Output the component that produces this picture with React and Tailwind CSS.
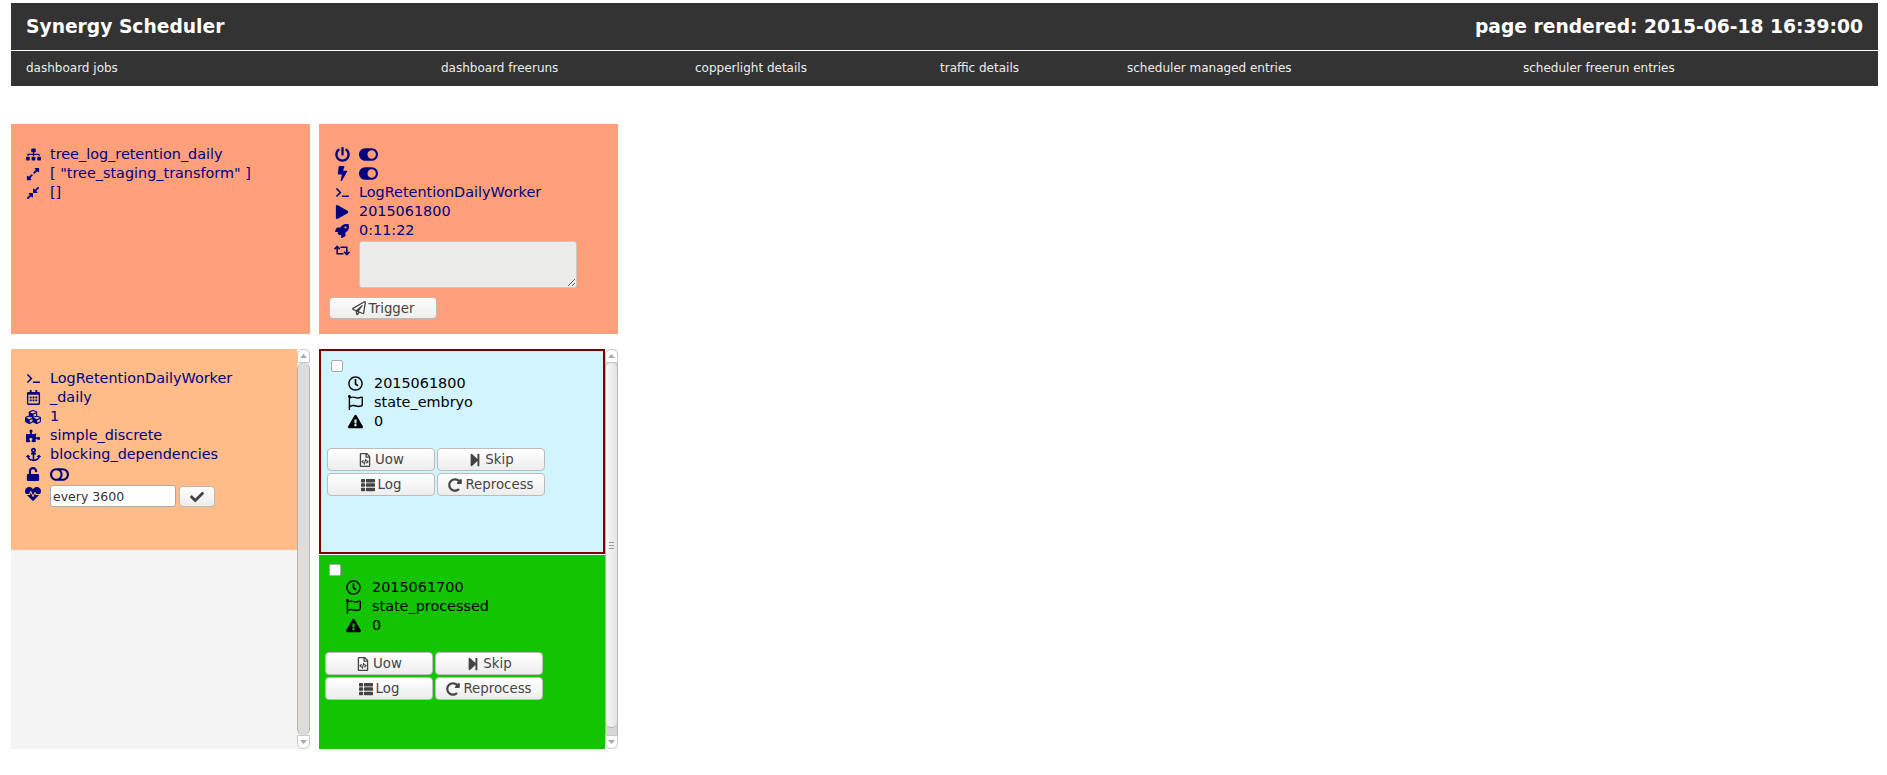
import React from 'react';
import {
  FaSitemap, FaExpandAlt, FaCompressAlt, FaPowerOff, FaBolt, FaToggleOn, FaToggleOff, FaTerminal,
  FaPlay, FaRocket, FaRetweet, FaRegPaperPlane, FaRegCalendarAlt, FaCubes, FaPuzzlePiece, FaAnchor,
  FaUnlock, FaHeartbeat, FaCheck, FaRegClock, FaRegFlag, FaExclamationTriangle, FaRegFileCode,
  FaStepForward, FaThList, FaRedoAlt,
} from 'react-icons/fa';

const NAV = [
  ['dashboard jobs', 'w-[415px]'],
  ['dashboard freeruns', 'w-[254px]'],
  ['copperlight details', 'w-[245px]'],
  ['traffic details', 'w-[187px]'],
  ['scheduler managed entries', 'w-[396px]'],
  ['scheduler freerun entries', 'w-[300px]'],
];

function Row({ icon: Icon, size = 15, children, iconCol = 'w-[25px]' }) {
  return (
    <div className="flex items-center h-[19px]">
      <span className={`${iconCol} shrink-0 flex justify-center pr-[9px]`}>
        <Icon size={size} />
      </span>
      <span className="whitespace-nowrap">{children}</span>
    </div>
  );
}

function Btn({ icon: Icon, label, className = 'w-[108px] h-[23px]' }) {
  return (
    <button className={`${className} flex items-center justify-center gap-[3px] rounded-[4px] border border-[#bbbbbb] bg-gradient-to-b from-white to-[#ededed] text-[13.33px] text-[#444444]`}>
      {Icon && <Icon size={14} />}
      {label}
    </button>
  );
}

// drawn to look like the old GTK scrollbar in the screenshot
function Scrollbar({ light }) {
  return (
    <div className="w-[13px] shrink-0 flex flex-col bg-[#f4f4f4]">
      <div className="h-[14px] shrink-0 flex items-center justify-center rounded-t-[6px] border border-[#c8c8c8] bg-white text-[#aaaaaa]">
        <svg width="7" height="4" viewBox="0 0 7 4"><path d="M3.5 0 7 4H0z" fill="currentColor" /></svg>
      </div>
      {light ? (
        <div className="flex-1 flex flex-col bg-[#d8d8d6] border-x border-[#b4b4b0]">
          <div className="flex-1 flex flex-col gap-[2px] items-center justify-center rounded-[6px] bg-gradient-to-r from-[#f8f8f8] to-[#e4e4e4] border-b border-[#b4b4b0] mb-[7px]">
            <span className="w-[5px] h-px bg-[#999999]" />
            <span className="w-[5px] h-px bg-[#999999]" />
            <span className="w-[5px] h-px bg-[#999999]" />
          </div>
        </div>
      ) : (
        <div className="flex-1 rounded-b-[6px] rounded-t-[6px] bg-[#dedddb] border-x border-[#b4b4b0]" />
      )}
      <div className="h-[14px] shrink-0 flex items-center justify-center rounded-b-[6px] border border-[#c8c8c8] bg-white text-[#aaaaaa]">
        <svg width="7" height="4" viewBox="0 0 7 4"><path d="M0 0h7L3.5 4z" fill="currentColor" /></svg>
      </div>
    </div>
  );
}

function TimeRecord({ bg, border, time, state }) {
  return (
    <div className={`${bg} ${border} shrink-0`}>
      <div className="pl-[10px] pt-[9px]">
        <input type="checkbox" className="block appearance-none w-[12px] h-[12px] rounded-[2px] border border-[#aaaaaa] bg-white" />
      </div>
      <div className="pl-[25px] mt-[2px] text-black">
        <Row icon={FaRegClock} iconCol="w-[28px]">{time}</Row>
        <Row icon={FaRegFlag} iconCol="w-[28px]">{state}</Row>
        <Row icon={FaExclamationTriangle} iconCol="w-[28px]">0</Row>
      </div>
      <div className="pl-[6px] mt-[17px] flex flex-col gap-[2px]">
        <div className="flex gap-[2px]">
          <Btn icon={FaRegFileCode} label="Uow" />
          <Btn icon={FaStepForward} label="Skip" />
        </div>
        <div className="flex gap-[2px]">
          <Btn icon={FaThList} label="Log" />
          <Btn icon={FaRedoAlt} label="Reprocess" />
        </div>
      </div>
    </div>
  );
}

export default function App() {
  return (
    <div className="min-h-screen bg-white pt-[3px] pl-[11px] pr-[9px] font-['DejaVu_Sans',sans-serif] text-[14.4px] leading-[19px] text-[#000080]">
      <header className="bg-[#333333] text-white">
        <div className="h-[48px] px-[15px] flex items-center justify-between text-[18.7px] font-bold border-b border-white">
          <span>Synergy Scheduler</span>
          <span>page rendered: 2015-06-18 16:39:00</span>
        </div>
        <nav className="h-[35px] pl-[15px] flex items-center text-[12px] text-[#eeeeee]">
          {NAV.map(([label, w]) => (
            <a key={label} className={`${w} shrink-0`}>{label}</a>
          ))}
        </nav>
      </header>

      <main className="mt-[38px] w-[607px] grid grid-cols-[299px_299px] gap-x-[9px] gap-y-[15px]">
        <section className="h-[210px] bg-[#ffa07a] pl-[14px] pt-[21px]">
          <Row icon={FaSitemap}>tree_log_retention_daily</Row>
          <Row icon={FaExpandAlt} size={14}>[ "tree_staging_transform" ]</Row>
          <Row icon={FaCompressAlt} size={14}>[]</Row>
        </section>

        <section className="h-[210px] bg-[#ffa07a] pl-[15px] pt-[21px]">
          <Row icon={FaPowerOff}><FaToggleOn size={19} /></Row>
          <Row icon={FaBolt}><FaToggleOn size={19} /></Row>
          <Row icon={FaTerminal} size={13}>LogRetentionDailyWorker</Row>
          <Row icon={FaPlay} size={14}>2015061800</Row>
          <Row icon={FaRocket} size={14}>0:11:22</Row>
          <div className="flex items-start mt-px">
            <span className="w-[25px] shrink-0 flex justify-center pr-[9px] pt-px"><FaRetweet size={17} /></span>
            <textarea disabled className="block w-[218px] h-[47px] rounded-[3px] border border-[#c8c8c8] bg-[#ebebe9]" />
          </div>
          <div className="mt-[9px] -ml-[5px]">
            <Btn icon={FaRegPaperPlane} label="Trigger" className="w-[108px] h-[22px]" />
          </div>
        </section>

        <section className="h-[400px] flex">
          <div className="flex-1 bg-[#f4f4f4]">
            <div className="h-[201px] bg-[#ffbb88] pl-[14px] pt-[20px]">
              <Row icon={FaTerminal} size={13}>LogRetentionDailyWorker</Row>
              <Row icon={FaRegCalendarAlt}>_daily</Row>
              <Row icon={FaCubes} size={18}>1</Row>
              <Row icon={FaPuzzlePiece} size={14}>simple_discrete</Row>
              <Row icon={FaAnchor}>blocking_dependencies</Row>
              <Row icon={FaUnlock} size={14}><FaToggleOff size={19} className="mt-[2px]" /></Row>
              <div className="flex items-start mt-[2px]">
                <span className="w-[25px] shrink-0 flex justify-center pr-[9px] pt-px"><FaHeartbeat size={16} /></span>
                <input readOnly value="every 3600" className="w-[126px] h-[22px] px-[2px] rounded-[3px] border border-[#aaaaaa] bg-white text-[12.5px] text-[#333333]" />
                <Btn icon={FaCheck} className="ml-[3px] mt-px w-[36px] h-[21px]" />
              </div>
            </div>
          </div>
          <Scrollbar />
        </section>

        <section className="h-[400px] flex">
          <div className="flex-1 flex flex-col gap-px">
            <TimeRecord bg="bg-[#d1f4ff]" border="border-2 border-[#800000] h-[205px]" time="2015061800" state="state_embryo" />
            <TimeRecord bg="bg-[#13c400]" border="flex-1" time="2015061700" state="state_processed" />
          </div>
          <Scrollbar light />
        </section>
      </main>
    </div>
  );
}
